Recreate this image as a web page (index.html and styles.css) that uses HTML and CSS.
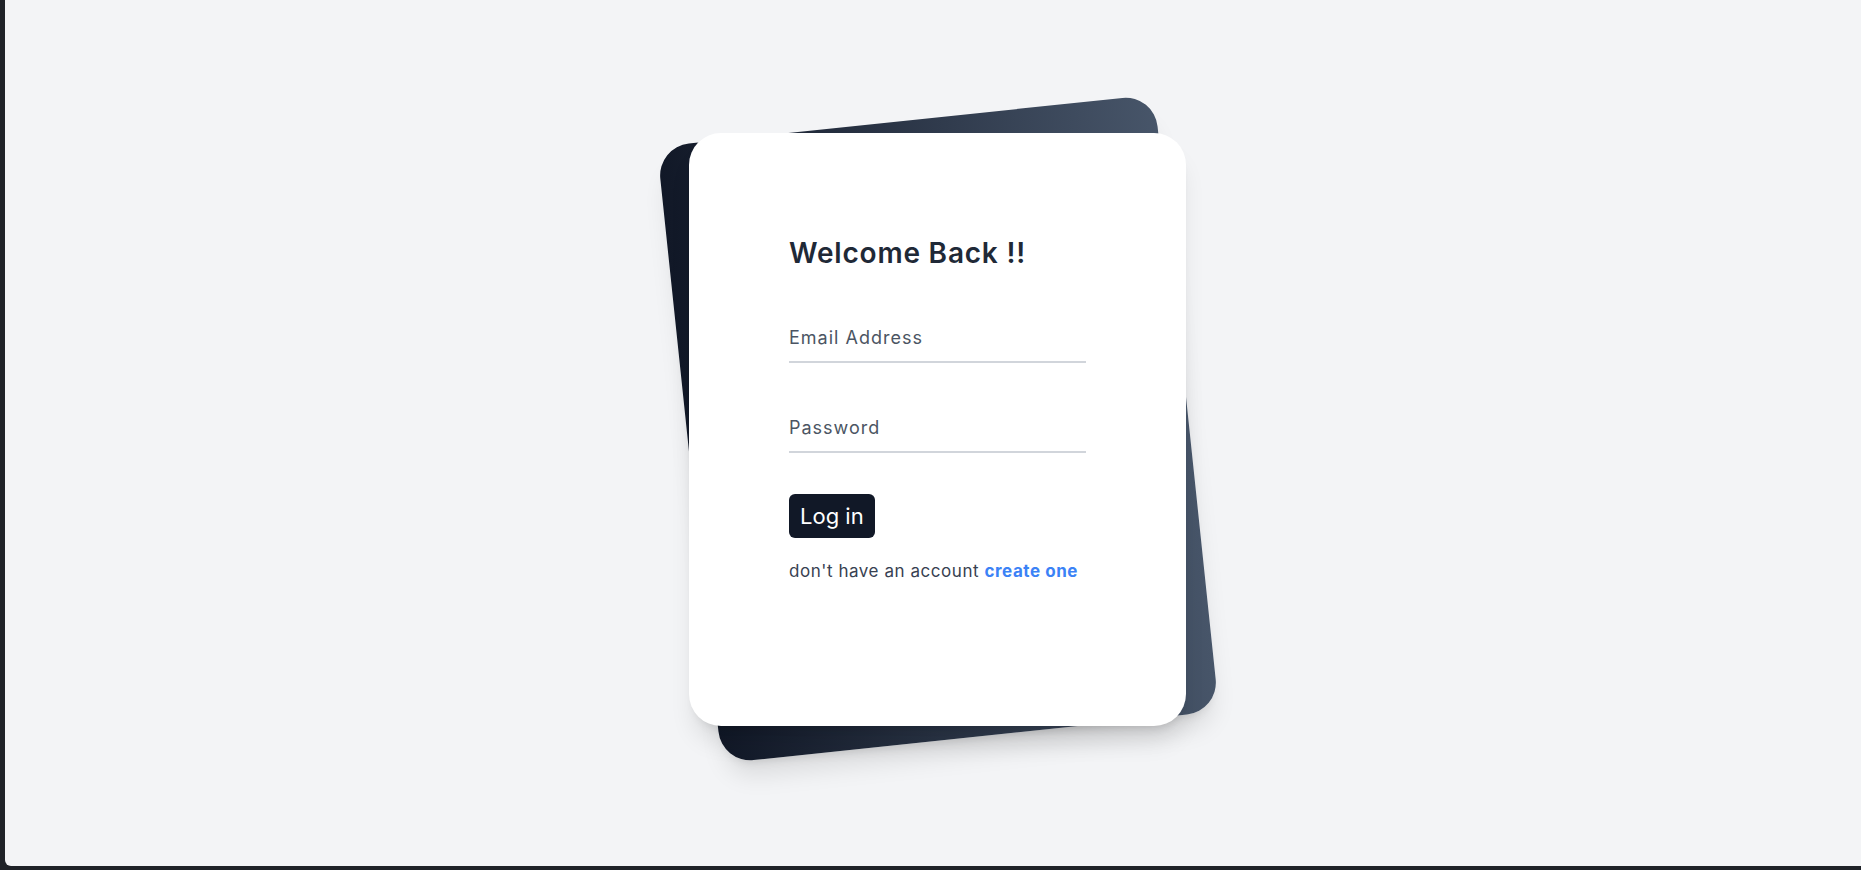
FILE: index.html
```html
<!DOCTYPE html>
<html lang="en">
<head>
<meta charset="utf-8">
<title>Login</title>
<link rel="stylesheet" href="styles.css">
</head>
<body>
<div class="frame">
  <main class="page">
    <div class="stack">
      <div class="backdrop"></div>
      <section class="card">
        <h1 class="title">Welcome Back !!</h1>
        <form class="form">
          <input class="field" type="email" placeholder="Email Address">
          <input class="field field-gap" type="password" placeholder="Password">
          <button class="btn" type="button">Log in</button>
          <p class="hint">don't have an account <a class="link" href="#">create one</a></p>
        </form>
      </section>
    </div>
  </main>
</div>
</body>
</html>
```
FILE: styles.css
```css
* { box-sizing: border-box; }
html, body { margin: 0; height: 100%; }
body {
  background: #1f2228;
  font-family: Inter, "Noto Sans", sans-serif;
}
.frame {
  height: 100vh;
  padding: 0 0 4px 5px;
}
.page {
  height: 100%;
  background: #f3f4f6;
  border-bottom-left-radius: 6px;
  display: grid;
  place-items: center;
  padding: 0 0 8px 9px;
}
.stack {
  display: grid;
  place-items: center;
}
.backdrop, .card { grid-area: 1 / 1; }
.backdrop {
  width: 500px;
  height: 620px;
  border-radius: 32px;
  background: linear-gradient(to right, #111827, #475569);
  transform: rotate(-6deg);
  box-shadow: 0 20px 25px -5px rgba(0,0,0,0.1), 0 8px 10px -6px rgba(0,0,0,0.1);
}
.card {
  position: relative;
  width: 497px;
  height: 593px;
  background: #fff;
  border-radius: 32px;
  padding: 103px 100px 0;
  box-shadow: 0 20px 25px -5px rgba(0,0,0,0.1), 0 8px 10px -6px rgba(0,0,0,0.1);
}
.title {
  margin: 0;
  font-size: 28px;
  line-height: 34px;
  font-weight: 600;
  letter-spacing: 0.8px;
  color: #1f2937;
}
.form {
  margin-top: 45px;
  display: flex;
  flex-direction: column;
  align-items: flex-start;
}
.field {
  display: block;
  width: 297px;
  height: 48px;
  padding: 0;
  border: 0;
  border-bottom: 2px solid #d1d5db;
  background: transparent;
  font-family: inherit;
  font-size: 18px;
  letter-spacing: 1px;
  color: #374151;
  outline: none;
}
.field::placeholder { color: #4b5563; opacity: 1; }
.field-gap { margin-top: 42px; }
.btn {
  margin-top: 41px;
  height: 44px;
  padding: 0 11px;
  border: 0;
  border-radius: 6px;
  background: #111827;
  color: #fff;
  font-family: inherit;
  font-size: 22px;
  line-height: 44px;
}
.hint {
  margin: 21px 0 0;
  font-size: 17px;
  line-height: 24px;
  letter-spacing: 0.55px;
  color: #374151;
}
.link {
  color: #3b82f6;
  font-weight: 700;
  text-decoration: none;
}
```
